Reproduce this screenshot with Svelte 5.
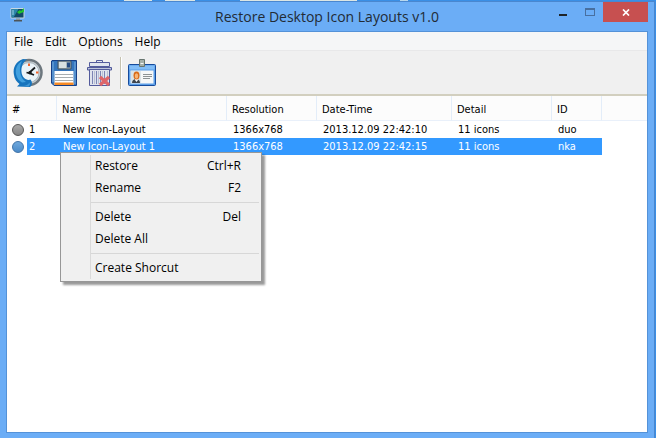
<script lang="ts">
	interface Layout {
		id: number;
		name: string;
		resolution: string;
		date: string;
		detail: string;
		code: string;
	}

	const menus = ['File', 'Edit', 'Options', 'Help'];
	const columns = ['#', 'Name', 'Resolution', 'Date-Time', 'Detail', 'ID'];

	const layouts: Layout[] = [
		{ id: 1, name: 'New Icon-Layout', resolution: '1366x768', date: '2013.12.09 22:42:10', detail: '11 icons', code: 'duo' },
		{ id: 2, name: 'New Icon-Layout 1', resolution: '1366x768', date: '2013.12.09 22:42:15', detail: '11 icons', code: 'nka' }
	];

	// Groups are divided by a separator line
	const contextGroups = [
		[
			{ label: 'Restore', key: 'Ctrl+R' },
			{ label: 'Rename', key: 'F2' }
		],
		[
			{ label: 'Delete', key: 'Del' },
			{ label: 'Delete All', key: '' }
		],
		[{ label: 'Create Shorcut', key: '' }]
	];

	let selectedId = $state(2);
	let menuOpen = $state(true);

	function select(id: number) {
		selectedId = id;
		menuOpen = false;
	}

	function openMenu(e: MouseEvent, id: number) {
		e.preventDefault();
		selectedId = id;
		menuOpen = true;
	}
</script>

<div class="desktop">
	<div class="window">
		<header class="titlebar">
			<svg class="app-icon" width="16" height="16" viewBox="0 0 16 16" aria-hidden="true">
				<rect x="0.5" y="1" width="14" height="10.5" rx="1" fill="#c9d8e0" />
				<rect x="1.5" y="2" width="12" height="8.5" fill="#124a68" />
				<path d="M1.500 2h7l-5 8.500h-2z" fill="#2c86a8" />
				<path d="M3 3v5" stroke="#9fd3e6" />
				<path d="M7 5l3-2 1 1 3-3v4l-3 1-2 1z" fill="#22c432" />
				<path d="M6 11.500h4v1.500h-4z" fill="#8b9498" />
				<path d="M4 13h8v1.500h-8z" fill="#4d5458" />
			</svg>
			<h1>Restore Desktop Icon Layouts v1.0</h1>
			<div class="controls">
				<button type="button" class="control" aria-label="Minimize">
					<svg width="10" height="10" viewBox="0 0 10 10"><path d="M1 7h8v2H1z" fill="#1f2428" /></svg>
				</button>
				<button type="button" class="control" aria-label="Maximize">
					<svg width="10" height="8" viewBox="0 0 10 8"><path d="M0 0h10v8H0zM1 2v5h8V2z" fill="#486f9f" fill-rule="evenodd" /></svg>
				</button>
				<button type="button" class="control close" aria-label="Close">
					<svg width="8" height="7" viewBox="0 0 8 7"><path d="M1 0.500l6 6M7 0.500l-6 6" stroke="#fff" stroke-width="1.700" /></svg>
				</button>
			</div>
		</header>

		<main class="client">
			<nav class="menubar">
				{#each menus as menu}
					<button type="button">{menu}</button>
				{/each}
			</nav>

			<div class="toolbar" role="toolbar">
				<button type="button" aria-label="Restore layout">
					<svg width="30" height="30" viewBox="0 0 30 30">
						<circle cx="16" cy="14.500" r="12.500" fill="#c6ccd0" stroke="#6d777e" stroke-width="2.500" />
						<circle cx="16" cy="14.500" r="10" fill="#eaf3f8" stroke="#a9b7bf" />
						<path d="M16 5.500v2.500M16 22v2.500M23 14.500h2.500" stroke="#f0642c" stroke-width="2" />
						<path d="M22 9.500l-5.500 5M13.500 14.500l4 1 3.500 1.500" stroke="#15191c" stroke-width="1.800" fill="none" />
						<circle cx="17" cy="14.800" r="1.800" fill="#15191c" />
						<path d="M10 1C2 4 0 10 .8 16c.6 5 3 8 5.700 10L4 28.500l13 .5c2.500-2 2.500-5 .5-7.500C14 23 9 20 8.500 14 8 9 10 4 14 1.500z" fill="#1674bd" />
						<path d="M9 3C4 6 2 11 3 16c.8 4 3 7 6 8.500l4-.5C7 20 5 11 9 3z" fill="#41a0df" />
						<path d="M9 27.500c4 .5 6-.5 7.500-3l.5 2-1.500 2z" fill="#3f98d6" />
					</svg>
				</button>
				<button type="button" aria-label="Save layout">
					<svg width="26" height="26" viewBox="0 0 26 26">
						<path d="M1 .5h24.500v25H3L.5 23V1z" fill="#3475bd" stroke="#173f87" />
						<path d="M2 2v20M24 2v22" stroke="#77aee0" />
						<path d="M7 1h13v8H7z" fill="#a9b7bd" stroke="#42515d" />
						<path d="M8 2h7v6H8z" fill="#d8e0e2" />
						<path d="M16 2.500h3v5h-3z" fill="#254b83" />
						<path d="M3.500 11h19v14h-19z" fill="#fff" />
						<path d="M4 14.500h18M4 17.500h18M4 20.500h18" stroke="#a8adb0" />
						<path d="M3.500 22.500h19V25h-19z" fill="#f68a25" />
					</svg>
				</button>
				<button type="button" aria-label="Delete layout">
					<svg width="26" height="28" viewBox="0 0 26 28">
						<path d="M9.500 3.500v-2h6v2" fill="#e3e7f1" stroke="#535b9c" />
						<path d="M2.500 3.500h20v4h-20z" fill="#dfe4ee" stroke="#535b9c" />
						<path d="M.5 8.500h24v2.500h-24z" fill="#bcc4da" stroke="#535b9c" />
						<path d="M2.500 10.500h20v16h-20z" fill="#dfe3ed" stroke="#535b9c" />
						<path d="M5.500 12v13M9.500 12v13M13.500 12v13M17.500 12v13" stroke="#7b84b4" />
						<path d="M7.500 12v13M11.500 12v13M15.500 12v13M20.500 12v13" stroke="#b7bfd4" />
						<path d="M13 18l9 8M22 18l-9 8" stroke="#df6468" stroke-width="3.200" />
					</svg>
				</button>
				<span class="divider"></span>
				<button type="button" aria-label="Layout details">
					<svg width="30" height="28" viewBox="0 0 30 28">
						<rect x="1.500" y="5.500" width="27" height="21" rx="1" fill="#5b9ee8" stroke="#164b9c" />
						<path d="M2.500 6.500h25v4h-25z" fill="#81bdf7" />
						<path d="M3.500 11.500h23v13h-23z" fill="#f5f7f8" />
						<path d="M4 12h10v12H4z" fill="#dbe3e7" />
						<path d="M5 24c0-3 2-4 4-4s4 1 4 4z" fill="#3e464f" />
						<path d="M8 18h3v3l-1.500 2L8 21z" fill="#fff" />
						<ellipse cx="9.500" cy="16.500" rx="3" ry="4" fill="#d96a18" />
						<ellipse cx="9.500" cy="17" rx="1.700" ry="2.700" fill="#f6b477" />
						<path d="M16 15.500h9M16 17.500h9M16 19.500h7" stroke="#8c9294" />
						<path d="M12.500 .5h5v7h-5z" fill="#a5b0aa" stroke="#67756f" />
						<path d="M13.500 4.500h3" stroke="#f4f7f4" />
					</svg>
				</button>
			</div>

			<div class="list">
				<table>
					<colgroup>
						<col class="c-num" />
						<col class="c-name" />
						<col class="c-res" />
						<col class="c-date" />
						<col class="c-detail" />
						<col class="c-id" />
						<col />
					</colgroup>
					<thead>
						<tr>
							{#each columns as column}
								<th scope="col">{column}</th>
							{/each}
							<td class="rest"></td>
						</tr>
					</thead>
					<tbody>
						{#each layouts as layout}
							<tr
								class:selected={layout.id === selectedId}
								onclick={() => select(layout.id)}
								oncontextmenu={(e) => openMenu(e, layout.id)}
							>
								<td class="num"><span class="row-head"><i class="dot"></i>{layout.id}</span></td>
								<td>{layout.name}</td>
								<td>{layout.resolution}</td>
								<td>{layout.date}</td>
								<td>{layout.detail}</td>
								<td>{layout.code}</td>
								<td class="rest"></td>
							</tr>
						{/each}
					</tbody>
				</table>

				{#if menuOpen}
					<div class="context-menu" role="menu">
						{#each contextGroups as group}
							<div class="group" role="group">
								{#each group as item}
									<button type="button" role="menuitem" onclick={() => (menuOpen = false)}>
										<span>{item.label}</span>
										<span>{item.key}</span>
									</button>
								{/each}
							</div>
						{/each}
					</div>
				{/if}
			</div>
		</main>
	</div>
</div>

<style>
	:global(body) {
		margin: 0;
	}

	.desktop {
		box-sizing: border-box;
		display: flex;
		min-height: 100vh;
		padding: 1px 1px 0 0;
		background: linear-gradient(to right, #3a8fe6 124px, #dce6e4 124px 152px, #3a8fe6 152px 165px, #dce6e4 165px 195px, #3a8fe6 195px 240px, #dce6e4 240px 357px, #3a8fe6 357px 400px, #b8d8ee 400px 408px, #3a8fe6 408px);
		font-family: 'Open Sans', 'Noto Sans', sans-serif;
		font-size: 12px;
		color: #000;
	}

	button {
		padding: 0;
		border: none;
		background: none;
		font: inherit;
		color: inherit;
	}

	svg {
		display: block;
	}

	.window {
		box-sizing: border-box;
		flex: 1;
		display: flex;
		flex-direction: column;
		min-width: 0;
		padding: 0 6px 5px;
		border-top: 1px solid #4a87cf;
		border-right: 1px solid #4a87cf;
		background: #6badf6;
	}

	.titlebar {
		display: grid;
		grid-template-columns: 1fr auto 1fr;
		height: 29px;
	}

	.app-icon {
		margin: 5px 0 0 4px;
	}

	h1 {
		margin: 0;
		font-size: 14px;
		font-weight: 400;
		line-height: 29px;
		white-space: nowrap;
		color: #222b35;
	}

	.controls {
		display: flex;
		justify-content: flex-end;
		align-items: flex-start;
	}

	.control {
		display: flex;
		align-items: center;
		justify-content: center;
		width: 27px;
		height: 20px;
	}

	.control.close {
		width: 45px;
		background: #c75050;
	}

	.client {
		flex: 1;
		display: flex;
		flex-direction: column;
		border: 1px solid #5492d8;
		background: #fff;
	}

	.menubar {
		display: flex;
		height: 18px;
		padding-left: 1px;
		border-bottom: 1px solid #e8e8e9;
		background: #f5f6f7;
	}

	.menubar button {
		padding: 0 6px;
		line-height: 20px;
	}

	.toolbar {
		display: flex;
		align-items: center;
		height: 43px;
		padding-left: 3px;
		border-bottom: 2px solid #d2cfbf;
		background: #f0f0f0;
	}

	.toolbar button {
		display: flex;
		align-items: center;
		justify-content: center;
		width: 36px;
		height: 36px;
	}

	.divider {
		width: 1px;
		height: 32px;
		margin: 0 2px;
		border-right: 1px solid #fff;
		background: #c5c2b0;
	}

	.list {
		position: relative;
		flex: 1;
		font-family: 'DejaVu Sans Condensed', 'DejaVu Sans', sans-serif;
		font-size: 11px;
	}

	table {
		width: 100%;
		border-collapse: separate;
		border-spacing: 0;
		table-layout: fixed;
	}

	.c-num,
	.c-id {
		width: 50px;
	}

	.c-name {
		width: 170px;
	}

	.c-res {
		width: 90px;
	}

	.c-date {
		width: 135px;
	}

	.c-detail {
		width: 100px;
	}

	th,
	td {
		padding: 0 0 0 6px;
		text-align: left;
		white-space: nowrap;
	}

	th {
		height: 22px;
		padding: 2px 0 0 5px;
		font-weight: 400;
		border-right: 1px solid #e3edf9;
	}

	thead tr {
		background: #fcfcfc;
	}

	thead th,
	thead td {
		border-bottom: 1px solid #e9f0fa;
	}

	tbody td {
		height: 17px;
		line-height: 18px;
		padding-top: 0;
	}

	tbody td:not(.num) {
		line-height: 17px;
	}

	tbody td.num {
		padding-left: 5px;
		line-height: 17px;
	}

	.row-head {
		display: flex;
		align-items: center;
		gap: 5px;
	}

	.dot {
		box-sizing: border-box;
		width: 12px;
		height: 12px;
		border: 1px solid #555;
		border-radius: 50%;
		background: linear-gradient(#aaa, #858585);
	}

	.selected td {
		color: #fff;
		background: #3399ff;
	}

	.selected td.num {
		background: linear-gradient(to right, #fff 20px, #3399ff 20px);
	}

	.selected td.rest {
		background: none;
	}

	.selected .dot {
		border-color: #3f73a8;
		background: linear-gradient(#6fa8dc, #4b8bc9);
	}

	.context-menu {
		position: absolute;
		top: 56px;
		left: 53px;
		box-sizing: border-box;
		width: 202px;
		padding: 2px;
		border: 1px solid #979797;
		background: linear-gradient(#dadada, #dadada) 29px 2px / 1px calc(100% - 4px) no-repeat #f0f0f0;
		box-shadow: 3px 3px 2px rgba(0, 0, 0, 0.4);
		font-family: 'Open Sans', 'Noto Sans', sans-serif;
		font-size: 12px;
	}

	.group + .group {
		margin-top: 3px;
		padding-top: 4px;
		background: linear-gradient(#d7d7d7, #d7d7d7) 28px 0 / 100% 1px no-repeat;
	}

	.context-menu button {
		display: flex;
		justify-content: space-between;
		width: 100%;
		padding: 0 18px 0 32px;
		line-height: 22px;
	}

	.context-menu button:hover {
		background: #d1e2f2;
	}
</style>
